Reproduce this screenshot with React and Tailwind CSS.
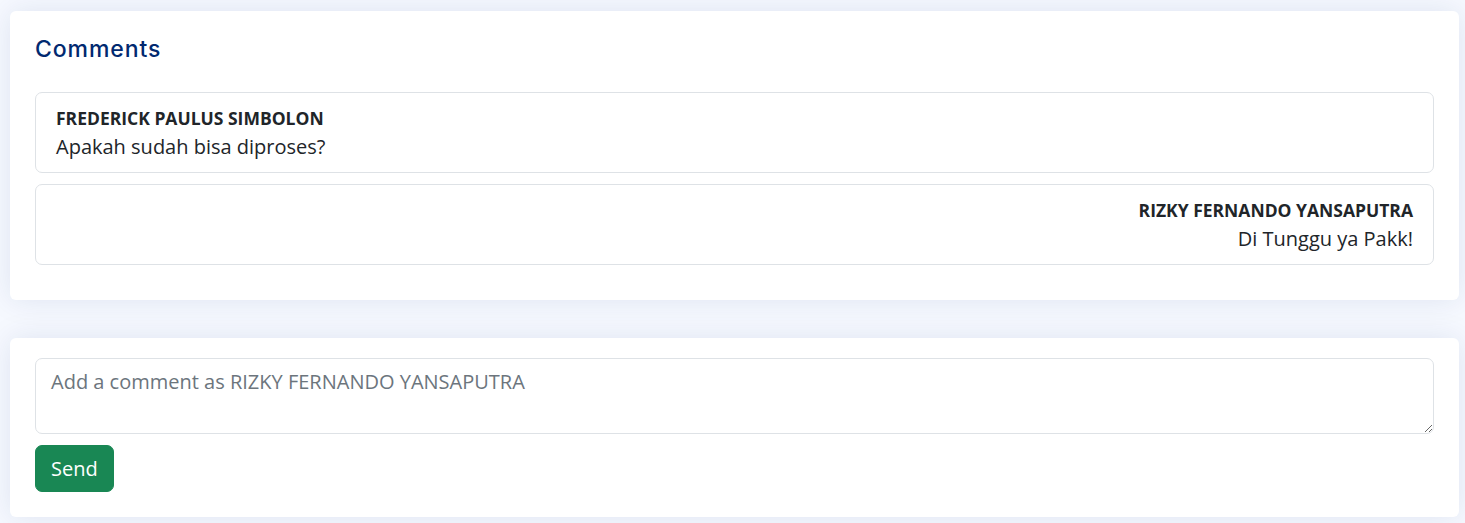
export default function App() {
  return (
    <div
      className="min-h-[523px] w-full bg-[#f6f9ff] pt-[11px] pl-[10px] pr-[6px] pb-[6px]"
      style={{ fontFamily: '"Open Sans", "Liberation Sans", sans-serif' }}
    >
      <div className="rounded-[6px] bg-white px-[25px] pb-[35px] shadow-[0_0_30px_rgba(1,41,112,0.1)]">
        <h5
          className="pt-[25px] pb-[19px] text-[23px] font-medium leading-[27px] tracking-[0.04em] text-[#012970]"
          style={{ fontFamily: 'Inter, "Noto Sans", sans-serif' }}
        >
          Comments
        </h5>
        <div className="mt-[10px] flex flex-col gap-[11px] text-[#212529]">
          <div className="rounded-[7px] border border-[#dee2e6] px-5 pt-3 pb-[10px]">
            <div className="text-[17.5px] font-bold leading-[27px]">FREDERICK PAULUS SIMBOLON</div>
            <div className="text-[20px] leading-[30px]">Apakah sudah bisa diproses?</div>
          </div>
          <div className="rounded-[7px] border border-[#dee2e6] px-5 pt-3 pb-[10px] text-right">
            <div className="text-[17.5px] font-bold leading-[27px]">RIZKY FERNANDO YANSAPUTRA</div>
            <div className="text-[20px] leading-[30px]">Di Tunggu ya Pakk!</div>
          </div>
        </div>
      </div>

      <div className="mt-[38px] rounded-[6px] bg-white px-[25px] pt-5 pb-[25px] shadow-[0_0_30px_rgba(1,41,112,0.1)]">
        <textarea
          rows={2}
          placeholder="Add a comment as RIZKY FERNANDO YANSAPUTRA"
          className="block h-[76px] w-full rounded-[7px] border border-[#dee2e6] px-[15px] py-[7.5px] text-[20px] leading-[30px] text-[#212529] outline-none placeholder:text-[#6c757d]"
          style={{ fontFamily: '"Open Sans", "Liberation Sans", sans-serif' }}
        />
        <button
          className="mt-[11px] block h-[47px] rounded-[7px] border border-[#198754] bg-[#198754] px-[15px] text-[20px] leading-[30px] text-white"
          style={{ fontFamily: '"Open Sans", "Liberation Sans", sans-serif' }}
        >
          Send
        </button>
      </div>
    </div>
  );
}
